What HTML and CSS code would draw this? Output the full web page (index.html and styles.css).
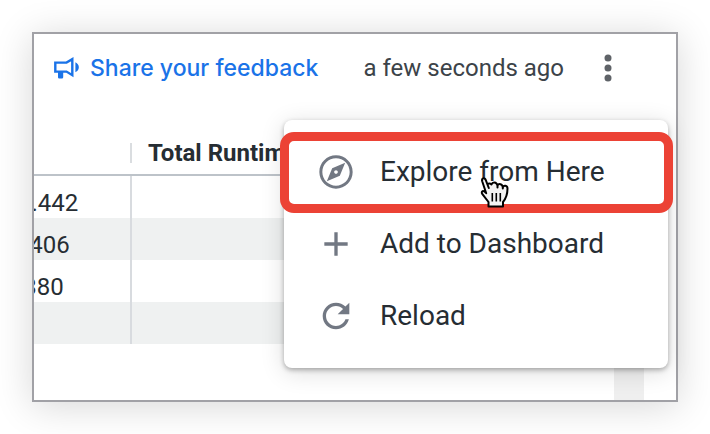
FILE: index.html
```html
<!DOCTYPE html>
<html lang="en">
<head>
<meta charset="utf-8">
<title>Query runtimes</title>
<link rel="stylesheet" href="styles.css">
</head>
<body>
<main class="card">
  <header class="toolbar">
    <a class="feedback" href="#feedback">
      <svg class="feedback-icon" viewBox="0 0 26 22" aria-hidden="true">
        <path d="M1.300 5.600H12.500L18.300 2.200V18.200L12.500 14.600H1.300Z" fill="none" stroke="currentColor" stroke-width="2.400"/>
        <path d="M4 14h5.200v6.300q0 1.200-1.200 1.200H5.200q-1.200 0-1.200-1.200zM21.400 5.200c4.600 2 4.600 8 0 10z" fill="currentColor"/>
      </svg>
      <span>Share your feedback</span>
    </a>
    <span class="updated">a few seconds ago</span>
    <button class="more" type="button" aria-label="More options" aria-expanded="true">
      <svg viewBox="0 0 40 40" aria-hidden="true">
        <circle cx="20" cy="10" r="3.500"/><circle cx="20" cy="20" r="3.500"/><circle cx="20" cy="30" r="3.500"/>
      </svg>
    </button>
  </header>
  <section class="content">
    <div class="table-wrap">
      <table>
        <thead><tr><th class="value"></th><th><span class="heading">Total Runtime</span></th></tr></thead>
        <tbody>
          <tr><td class="value">0.442</td><td></td></tr>
          <tr><td class="value shift-small">.406</td><td></td></tr>
          <tr><td class="value shift-large">.380</td><td></td></tr>
          <tr><td class="value"></td><td></td></tr>
        </tbody>
      </table>
    </div>
    <div class="scroll-track"></div>
  </section>
  <nav class="menu" aria-label="Options">
    <button class="item highlighted" type="button">
      <svg class="icon" viewBox="0 0 24 24" aria-hidden="true"><path d="M12 10.900c-.61 0-1.100.49-1.100 1.100s.49 1.100 1.100 1.100c.61 0 1.100-.49 1.100-1.100s-.49-1.100-1.100-1.100zM12 2C6.480 2 2 6.480 2 12s4.480 10 10 10 10-4.480 10-10S17.520 2 12 2zm0 18.200c-4.530 0-8.200-3.670-8.200-8.200S7.470 3.800 12 3.800s8.200 3.670 8.200 8.200-3.670 8.200-8.200 8.200zM6.500 17.500l7.800-3.200L17.500 6.500 9.700 9.700 6.500 17.500z" fill-rule="evenodd"/></svg>
      <span>Explore from Here</span>
      <svg class="pointer" viewBox="0 0 30 32" aria-hidden="true">
        <path d="M9.500 18L5.800 4.800C5 1.600 1.500 2.600 2.400 5.600L6 16.200C3.200 13.600.8 15.200 2.200 17.800L8.500 26V30.500H23V26C25.500 23 27.500 18 27.500 12.500 27.500 9.600 23.800 9.300 23.500 11.500 23.300 7.800 18.800 7.700 18 10 17.300 6.500 13 6.500 12 9L8 9.500 5.800 4.800" fill="#f4f4f4"/>
        <path d="M8.800 12L5.800 4.200C4.800 1 1.300 2.300 2.200 5.300L6.200 17.200C3.200 13.600.8 15.200 2.200 17.800L8.500 26V30.500H23V26C25.500 23 27.500 18 27.500 12.500 27.500 9.300 23.600 8.800 22.800 11.500V12.500M22.800 11.500C22.600 7.600 18.600 7.200 17.500 9.500V11.500M17.500 9.500C16.600 5.700 12.500 5.500 11.500 8.500 10.500 7.500 8.500 7.500 7.300 8.300" fill="none" stroke="#000" stroke-width="2" stroke-linejoin="round" stroke-linecap="round"/>
        <path d="M12.300 17v8.500M16.300 17v8.500M20.300 17v8.500" stroke="#000" stroke-width="1.600"/>
      </svg>
    </button>
    <button class="item" type="button">
      <svg class="icon" viewBox="0 0 24 24" aria-hidden="true"><path d="M19 13h-6v6h-2v-6H5v-2h6V5h2v6h6v2z"/></svg>
      <span>Add to Dashboard</span>
    </button>
    <button class="item" type="button">
      <svg class="icon" viewBox="0 0 24 24" aria-hidden="true"><path d="M17.650 6.350C16.200 4.900 14.210 4 12 4c-4.420 0-7.990 3.580-7.990 8s3.570 8 7.990 8c3.730 0 6.840-2.550 7.730-6h-2.080c-.82 2.330-3.040 4-5.650 4-3.310 0-6-2.690-6-6s2.690-6 6-6c1.660 0 3.140.69 4.220 1.780L13 11h7V4l-2.350 2.350z"/></svg>
      <span>Reload</span>
    </button>
  </nav>
</main>
</body>
</html>
```
FILE: styles.css
```css
* { box-sizing: border-box; }
body {
  margin: 0;
  padding: 32px;
  background: #fff;
  color: #262d33;
  font: 24px/32px Roboto, sans-serif;
}
button {
  margin: 0;
  padding: 0;
  border: 0;
  background: none;
  color: inherit;
  font: inherit;
}
.card {
  position: relative;
  border: 2px solid #a1a1a6;
  background: #fff;
  box-shadow: 0 4px 36px rgba(0, 0, 0, .16);
}
.toolbar {
  display: flex;
  align-items: center;
  height: 68px;
  padding: 0 48px 0 20px;
}
.feedback {
  display: flex;
  align-items: center;
  gap: 10px;
  color: #1a73e8;
  font-family: Inter, sans-serif;
  font-size: 23px;
  font-weight: 500;
  text-decoration: none;
}
.feedback-icon { width: 26px; height: 22px; }
.updated { margin-left: auto; color: #3c4349; }
.more { width: 40px; height: 40px; margin-left: 24px; }
.more svg { display: block; fill: #5f6368; }
.content {
  display: flex;
  margin-top: 30px;
  padding-right: 32px;
}
.table-wrap {
  flex: 1;
  min-width: 0;
  padding-bottom: 56px;
  overflow: hidden;
}
table {
  width: 100%;
  border-collapse: separate;
  border-spacing: 0;
  table-layout: fixed;
}
th, td { height: 42px; padding: 0; text-align: left; }
th { height: 44px; border-bottom: 2px solid #bdc3c9; }
.heading {
  display: block;
  margin-left: -2px;
  padding-left: 16px;
  border-left: 2px solid #dadde0;
  line-height: 20px;
}
td { padding-top: 12px; line-height: 30px; }
td.value { border-right: 2px solid #d8dbdf; }
.value { width: 98px; text-indent: -16px; }
.shift-small { text-indent: -11px; }
.shift-large { text-indent: -17px; }
tbody tr:nth-child(even) { background: #eff1f1; }
.scroll-track { width: 30px; background: #efefef; }
.menu {
  position: absolute;
  top: 86px;
  right: 8px;
  width: 384px;
  padding: 16px 0;
  border-radius: 8px;
  background: #fff;
  box-shadow: 0 2px 5px rgba(0, 0, 0, .3), 0 4px 24px rgba(0, 0, 0, .14);
}
.item {
  position: relative;
  display: flex;
  align-items: center;
  gap: 24px;
  width: 100%;
  height: 72px;
  padding-left: 32px;
  font-size: 28px;
}
.icon { width: 40px; height: 40px; fill: #727883; }
.highlighted::after {
  content: "";
  position: absolute;
  inset: -4px -5px -5px -4px;
  border: 9px solid #ec4235;
  border-radius: 14px;
}
.pointer {
  position: absolute;
  z-index: 1;
  top: 40px;
  left: 196px;
  width: 30px;
  height: 32px;
}
```
